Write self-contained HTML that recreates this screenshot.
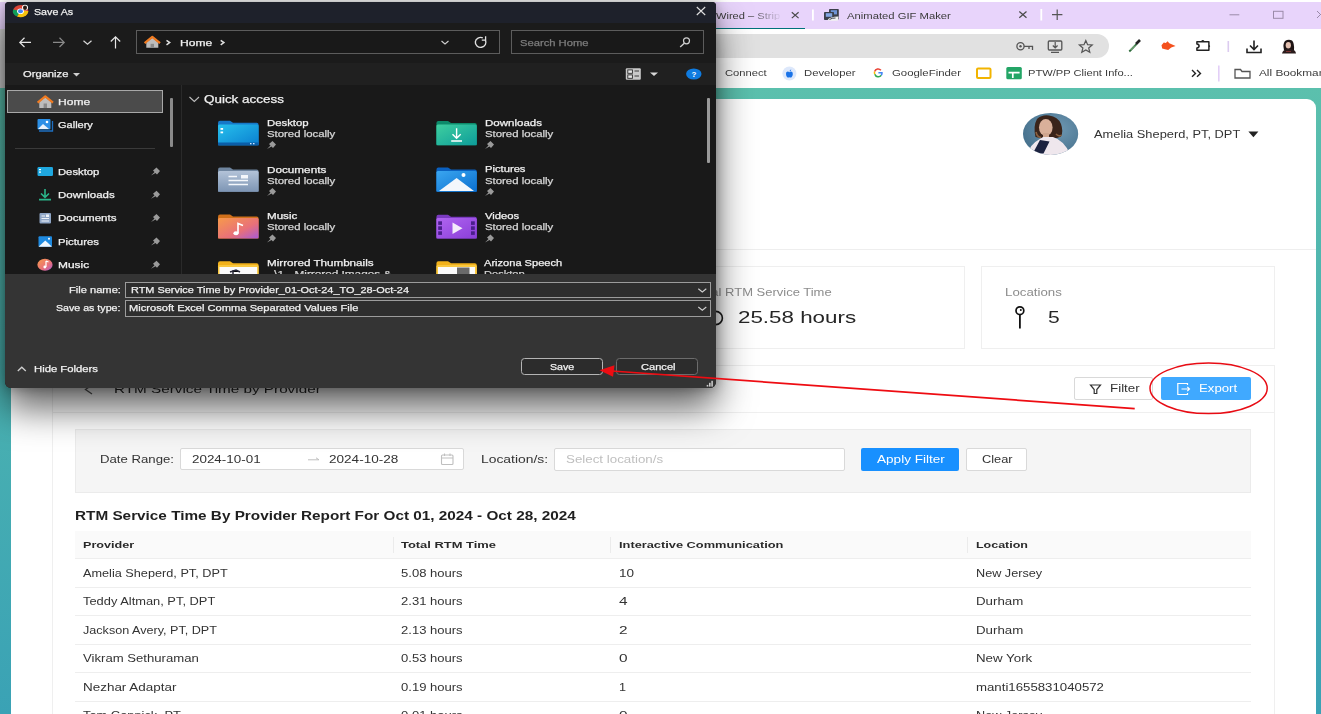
<!DOCTYPE html>
<html><head><meta charset="utf-8">
<style>
html,body{margin:0;padding:0;width:1321px;height:714px;overflow:hidden;background:#fff;font-family:"Liberation Sans",sans-serif;}
.a{position:absolute;}
.t{position:absolute;white-space:nowrap;transform-origin:0 0;font-family:"Liberation Sans",sans-serif;}
svg{position:absolute;overflow:visible;}
</style></head><body>
<!-- ============ BROWSER CHROME ============ -->
<div class="a" style="left:0;top:0;width:1321px;height:2px;background:#ffffff"></div>
<div class="a" style="left:0;top:2px;width:1321px;height:26.5px;background:#e8d4fb"></div>
<div class="a" style="left:600px;top:27.8px;width:204.6px;height:1.5px;background:#00737a"></div>
<div class="a" style="left:0;top:30px;width:1321px;height:58px;background:#ffffff"></div>
<div class="a" style="left:0;top:33.7px;width:1108.7px;height:24.7px;background:#e1e1e1;border-radius:0 12.5px 12.5px 0"></div>
<svg style="left:0;top:0" width="1321" height="90" viewBox="0 0 1321 90">
 <!-- tab close -->
 <path d="M791.8 12.3 L798.6 18.1 M798.6 12.3 L791.8 18.1" stroke="#4a4a4a" stroke-width="1.2"/>
 <rect x="812" y="9.5" width="1.8" height="11" fill="#ffffff"/>
 <!-- gif icon -->
 <rect x="829" y="9" width="9.8" height="10.5" fill="#3a3f4a" rx="0.8"/>
 <rect x="830.8" y="10.2" width="6.2" height="4.2" fill="#6f95d6"/>
 <rect x="824" y="12" width="10" height="8" fill="#3a3f4a" rx="0.8"/>
 <rect x="825.8" y="13.2" width="6.4" height="3.6" fill="#82a6e2"/>
 <path d="M827.5 20.2 Q829.5 16.8 838.5 16.6 L838 20.4 Q834 21.4 827.5 20.2 Z" fill="#f2f2f2"/>
 <path d="M829.5 19.5 Q832 17.8 835.5 18" fill="none" stroke="#2a3140" stroke-width="0.9"/>
 <path d="M1019.3 11.5 L1026.5 17.8 M1026.5 11.5 L1019.3 17.8" stroke="#4a4a4a" stroke-width="1.2"/>
 <rect x="1040.4" y="9" width="1.8" height="11.5" fill="#ffffff"/>
 <path d="M1052 14.7 H1062.4 M1057.2 9.5 V19.9" stroke="#555" stroke-width="1.2"/>
 <path d="M1229.5 14.8 H1239.3" stroke="#9a8aa8" stroke-width="1"/>
 <rect x="1273.5" y="11.3" width="9.5" height="7" fill="none" stroke="#9a8aa8" stroke-width="1"/>
 <path d="M1317 11 L1324 18 M1324 11 L1317 18" stroke="#9a8aa8" stroke-width="1"/>
 <!-- address bar icons -->
 <circle cx="1020.5" cy="46.3" r="3.6" fill="none" stroke="#555" stroke-width="1.3"/>
 <circle cx="1020.5" cy="46.3" r="1.2" fill="#555"/>
 <path d="M1024 46.3 H1032.5 V50 M1029 46.3 V49" fill="none" stroke="#555" stroke-width="1.3"/>
 <rect x="1048.3" y="41" width="13.5" height="9" fill="none" stroke="#555" stroke-width="1.3" rx="1"/>
 <path d="M1051 52.3 H1059 M1055.2 42 V47.5 M1052.8 45.5 L1055.2 47.8 L1057.6 45.5" fill="none" stroke="#555" stroke-width="1.2"/>
 <path d="M1085.8 40.5 L1087.6 44.7 L1092.2 45 L1088.7 48 L1089.8 52.3 L1085.8 49.9 L1081.8 52.3 L1082.9 48 L1079.4 45 L1084 44.7 Z" fill="none" stroke="#555" stroke-width="1.2"/>
 <!-- extensions -->
 <path d="M1129.3 51.5 L1136.5 44.2" stroke="#2d6b3a" stroke-width="1.9"/><path d="M1130.5 50 L1135 45.5" stroke="#b8e0b0" stroke-width="0.8"/>
 <path d="M1136 44 L1140 40" stroke="#222" stroke-width="2.6"/>
 <path d="M1161.5 45.2 L1163.8 42.6 L1165.8 43 L1167.6 41.3 L1169.3 43.2 L1175.6 46 L1171.2 47.4 L1168.2 50 L1165 49.2 L1162.2 48.6 Z" fill="#f4511e"/>
 <path d="M1196.9 41.7 H1208.9 V50.2 H1196.9 V47.9 Q1199.1 47.6 1199.1 45.95 Q1199.1 44.3 1196.9 44 Z" fill="none" stroke="#222" stroke-width="1.5" stroke-linejoin="round"/><path d="M1201 41.2 Q1202.8 38.9 1204.6 41.2 Z" fill="#222"/><path d="M1208.9 44.9 Q1211.4 46 1208.9 47.2 Z" fill="#222"/>
 <rect x="1227.5" y="41" width="1.6" height="11" fill="#dccbf0"/>
 <path d="M1254 40.5 V49 M1250 45.5 L1254 49.5 L1258 45.5 M1247 48.5 V52.5 H1261 V48.5" fill="none" stroke="#222" stroke-width="1.6"/>
 <path d="M1284 50 Q1282.5 44 1285 41 Q1288.5 38.6 1292 40.5 Q1294.5 43 1294 50 Z" fill="#1e1414"/>
 <ellipse cx="1288.3" cy="45.2" rx="2.6" ry="3.3" fill="#e4c0b0"/>
 <path d="M1282 53.6 Q1283 49.5 1287 49 L1291 49 Q1295.5 49.5 1296 53.6 Z" fill="#2a1c1c"/>
 <path d="M1286 51.5 L1291 51.5" stroke="#7a3030" stroke-width="1"/>
 <!-- bookmarks -->
 <circle cx="789.4" cy="73.5" r="7" fill="#dde8fb"/>
 <path d="M789.4 72.2 C788 71 786 71.5 786 73.9 C786 76 787.4 77.6 788.3 77.6 C788.9 77.6 789 77.3 789.4 77.3 C789.8 77.3 790 77.6 790.6 77.6 C791.5 77.6 792.8 75.9 792.8 73.9 C792.8 71.5 790.8 71 789.4 72.2 Z" fill="#1a73e8"/><path d="M789.5 71.5 Q789.7 69.7 791.3 69.5 Q791 71.2 789.5 71.5 Z" fill="#1a73e8"/>
 <path d="M880.9 70.3 A3.7 3.7 0 0 0 874.6 71.5" fill="none" stroke="#ea4335" stroke-width="1.5"/>
 <path d="M874.6 71.5 A3.7 3.7 0 0 0 874.8 74.2" fill="none" stroke="#fbbc05" stroke-width="1.5"/>
 <path d="M874.8 74.2 A3.7 3.7 0 0 0 881.3 75.3" fill="none" stroke="#34a853" stroke-width="1.5"/>
 <path d="M881.3 75.3 A3.7 3.7 0 0 0 882 72.8 H878.4" fill="none" stroke="#4285f4" stroke-width="1.5"/>
 <rect x="977" y="68.5" width="13.5" height="9.5" fill="none" stroke="#f2b400" stroke-width="2" rx="1"/>
 <rect x="1006.3" y="67" width="15.5" height="12.3" fill="#23a566" rx="1.5"/>
 <path d="M1008.5 72.6 H1019.6 M1012.8 72.6 V78" stroke="#fff" stroke-width="1.7"/>
 <path d="M1192 70 L1195.5 73.4 L1192 76.8 M1197 70 L1200.5 73.4 L1197 76.8" fill="none" stroke="#222" stroke-width="1.4"/>
 <rect x="1218" y="65.5" width="1.6" height="16" fill="#e3cff7"/>
 <path d="M1235 70 V78 H1250 V71.5 H1242 L1240.5 69.5 H1235 Z" fill="none" stroke="#555" stroke-width="1.3"/>
</svg>
<div class="a" style="left:0;top:29px;width:6px;height:59px;background:#d2d2d2"></div>
<div class="t" style="left:715.80px;top:11.62px;font-size:8.70px;line-height:8.70px;color:#3b3b3b;font-weight:400;transform:scaleX(1.2758);-webkit-mask-image:linear-gradient(to right,#000 55%,rgba(0,0,0,0.55) 75%,rgba(0,0,0,0.1) 100%);">Wired – Strip</div>
<div class="t" style="left:847.00px;top:11.62px;font-size:8.70px;line-height:8.70px;color:#3b3b3b;font-weight:400;transform:scaleX(1.2958);">Animated GIF Maker</div>
<div class="t" style="left:724.80px;top:68.92px;font-size:8.70px;line-height:8.70px;color:#3b3b3b;font-weight:400;transform:scaleX(1.2877);">Connect</div>
<div class="t" style="left:803.60px;top:68.92px;font-size:8.70px;line-height:8.70px;color:#3b3b3b;font-weight:400;transform:scaleX(1.2994);">Developer</div>
<div class="t" style="left:891.70px;top:68.92px;font-size:8.70px;line-height:8.70px;color:#3b3b3b;font-weight:400;transform:scaleX(1.3102);">GoogleFinder</div>
<div class="t" style="left:1027.60px;top:68.92px;font-size:8.70px;line-height:8.70px;color:#3b3b3b;font-weight:400;transform:scaleX(1.2801);">PTW/PP Client Info...</div>
<div class="t" style="left:1258.50px;top:68.92px;font-size:8.70px;line-height:8.70px;color:#3b3b3b;font-weight:400;transform:scaleX(1.3573);">All Bookmarks</div>
<!-- ============ PAGE ============ -->
<div class="a" style="left:0;top:88px;width:1321px;height:626px;background:linear-gradient(180deg,#5bc0ad 0%,#4cb3b0 40%,#3aa2b5 100%)"></div>
<div class="a" style="left:10.5px;top:99px;width:1305px;height:640px;background:#ffffff;border-radius:0 9px 0 0"></div>
<div class="a" style="left:11px;top:249px;width:1304.5px;height:1px;background:#eeeeee"></div>
<!-- stats cards -->
<div class="a" style="left:671px;top:266.3px;width:291.6px;height:81px;border:1px solid #efefef;box-sizing:content-box"></div>
<div class="a" style="left:981.2px;top:266.3px;width:291.5px;height:81px;border:1px solid #efefef"></div>
<!-- report card -->
<div class="a" style="left:51.5px;top:364.5px;width:1221.7px;height:400px;border:1px solid #efefef"></div>
<div class="a" style="left:51.5px;top:411.7px;width:1222.9px;height:1px;background:#efefef"></div>
<div class="a" style="left:1073.6px;top:377.2px;width:77.7px;height:20.7px;border:1px solid #d9d9d9;border-radius:2px;background:#fff"></div>
<div class="a" style="left:1161.3px;top:377.2px;width:89.7px;height:22.6px;border-radius:2px;background:#40a9ff"></div>
<!-- filter panel -->
<div class="a" style="left:75.2px;top:429px;width:1173.8px;height:61.5px;border:1px solid #ebebeb;background:#f5f5f5"></div>
<div class="a" style="left:180.4px;top:447.6px;width:282px;height:20.9px;border:1px solid #d9d9d9;border-radius:2px;background:#fff"></div>
<div class="a" style="left:554px;top:447.8px;width:289px;height:20.9px;border:1px solid #d9d9d9;border-radius:2px;background:#fff"></div>
<div class="a" style="left:861px;top:447.8px;width:97.6px;height:22.8px;border-radius:2px;background:#1890ff"></div>
<div class="a" style="left:966.2px;top:447.9px;width:59.3px;height:20.7px;border:1px solid #d9d9d9;border-radius:2px;background:#fff"></div>
<!-- table -->
<div class="a" style="left:75.4px;top:531px;width:1175.8px;height:26.8px;background:#fafafa;border-bottom:1px solid #eeeeee"></div>
<div class="a" style="left:392.8px;top:537px;width:1px;height:16px;background:#ebebeb"></div>
<div class="a" style="left:610px;top:537px;width:1px;height:16px;background:#ebebeb"></div>
<div class="a" style="left:967px;top:537px;width:1px;height:16px;background:#ebebeb"></div>
<div class="a" style="left:75.4px;top:586.6px;width:1175.8px;height:1px;background:#eeeeee"></div>
<div class="a" style="left:75.4px;top:615.1px;width:1175.8px;height:1px;background:#eeeeee"></div>
<div class="a" style="left:75.4px;top:643.6px;width:1175.8px;height:1px;background:#eeeeee"></div>
<div class="a" style="left:75.4px;top:672.1px;width:1175.8px;height:1px;background:#eeeeee"></div>
<div class="a" style="left:75.4px;top:700.6px;width:1175.8px;height:1px;background:#eeeeee"></div>
<svg style="left:0;top:0" width="1321" height="714" viewBox="0 0 1321 714">
 <!-- avatar -->
 <defs><clipPath id="av"><ellipse cx="1050.6" cy="133.9" rx="27.6" ry="21"/></clipPath>
 <radialGradient id="avbg" cx="0.6" cy="0.4" r="0.7"><stop offset="0" stop-color="#6f98b3"/><stop offset="1" stop-color="#3f6a86"/></radialGradient></defs>
 <g clip-path="url(#av)">
  <rect x="1020" y="110" width="62" height="48" fill="url(#avbg)"/>
  <path d="M1035.5 137 Q1033 126 1037 119 Q1042 114.5 1049 115.5 Q1058 116.5 1061 124 Q1063.5 131 1061 136.5 L1057 138 L1040 138 Z" fill="#3a241b"/>
  <path d="M1036 132 Q1037 137 1041 137.5 M1056 134 Q1059 137 1061.5 135" stroke="#8a6040" stroke-width="1.6" fill="none"/>
  <ellipse cx="1045.8" cy="127.5" rx="6.8" ry="8.4" fill="#d9b09a"/>
  <path d="M1039 121 Q1044 117 1052 120 L1052 118 Q1045 115 1039 119 Z" fill="#3a241b"/>
  <rect x="1043" y="133" width="6" height="6" fill="#cfa58e"/>
  <path d="M1027 158 Q1028.5 145 1039 139.5 L1043 137 L1053 137 Q1066 141 1071.5 158 Z" fill="#efe7ed"/>
  <path d="M1032.5 154 L1040 140 L1049.5 141.5 L1043.5 153.5 Z" fill="#1c2340"/>
 </g>
 <path d="M1248.4 131.5 H1258.4 L1253.4 137.3 Z" fill="#222"/>
 <!-- clock icon -->
 <circle cx="715.8" cy="318" r="6.6" fill="none" stroke="#1a1a1a" stroke-width="1.6"/>
 <!-- location pin -->
 <circle cx="1019.9" cy="310.7" r="3.9" fill="none" stroke="#111" stroke-width="1.7"/>
 <circle cx="1020.8" cy="309.9" r="1" fill="#111"/>
 <path d="M1019.9 314.6 V328.6" stroke="#111" stroke-width="1.8"/>
 <!-- back arrow -->
 <path d="M92 385 L85.5 389.5 L92 394" fill="none" stroke="#555" stroke-width="1.3"/>
 <!-- filter icon -->
 <path d="M1090.5 385 H1100.5 L1096.8 389.5 V393.5 H1094.2 V389.5 Z" fill="none" stroke="#333" stroke-width="1.2"/>
 <!-- export icon -->
 <path d="M1187.5 385 V383.5 H1177.8 V394.5 H1187.5 V393" fill="none" stroke="#fff" stroke-width="1.2"/>
 <path d="M1181.5 389 H1189.5 M1187.3 386.8 L1189.5 389 L1187.3 391.2" fill="none" stroke="#fff" stroke-width="1.2"/>
 <!-- date arrow -->
 <path d="M308 459.8 H319 L316 457.8" fill="none" stroke="#bfbfbf" stroke-width="1"/>
 <!-- calendar -->
 <rect x="441.5" y="455" width="11.5" height="9.5" fill="none" stroke="#bfbfbf" stroke-width="1.1" rx="1"/>
 <path d="M441.5 458 H453 M444.5 453.5 V456 M450 453.5 V456" stroke="#bfbfbf" stroke-width="1.1"/>
</svg>
<div class="t" style="left:1093.80px;top:128.63px;font-size:10.85px;line-height:10.85px;color:#333333;font-weight:400;transform:scaleX(1.1839);">Amelia Sheperd, PT, DPT</div>
<div class="t" style="left:694.00px;top:287.91px;font-size:10.32px;line-height:10.32px;color:#8c8c8c;font-weight:400;transform:scaleX(1.2596);">Total RTM Service Time</div>
<div class="t" style="left:737.50px;top:310.13px;font-size:15.87px;line-height:15.87px;color:#262626;font-weight:400;transform:scaleX(1.4097);">25.58 hours</div>
<div class="t" style="left:1004.50px;top:287.91px;font-size:10.32px;line-height:10.32px;color:#8c8c8c;font-weight:400;transform:scaleX(1.2871);">Locations</div>
<div class="t" style="left:1047.60px;top:310.33px;font-size:15.87px;line-height:15.87px;color:#262626;font-weight:400;transform:scaleX(1.3239);">5</div>
<div class="t" style="left:113.80px;top:383.57px;font-size:11.24px;line-height:11.24px;color:#262626;font-weight:400;transform:scaleX(1.3589);">RTM Service Time by Provider</div>
<div class="t" style="left:1110.00px;top:383.56px;font-size:10.05px;line-height:10.05px;color:#333333;font-weight:400;transform:scaleX(1.3304);">Filter</div>
<div class="t" style="left:1199.00px;top:383.56px;font-size:10.05px;line-height:10.05px;color:#ffffff;font-weight:400;transform:scaleX(1.3153);">Export</div>
<div class="t" style="left:99.50px;top:453.63px;font-size:10.85px;line-height:10.85px;color:#333333;font-weight:400;transform:scaleX(1.2150);">Date Range:</div>
<div class="t" style="left:191.70px;top:453.63px;font-size:10.85px;line-height:10.85px;color:#333333;font-weight:400;transform:scaleX(1.2365);">2024-10-01</div>
<div class="t" style="left:329.00px;top:453.63px;font-size:10.85px;line-height:10.85px;color:#333333;font-weight:400;transform:scaleX(1.2491);">2024-10-28</div>
<div class="t" style="left:480.50px;top:453.63px;font-size:10.85px;line-height:10.85px;color:#333333;font-weight:400;transform:scaleX(1.2789);">Location/s:</div>
<div class="t" style="left:566.00px;top:453.63px;font-size:10.85px;line-height:10.85px;color:#bfbfbf;font-weight:400;transform:scaleX(1.2294);">Select location/s</div>
<div class="t" style="left:876.80px;top:453.67px;font-size:10.58px;line-height:10.58px;color:#ffffff;font-weight:400;transform:scaleX(1.2826);">Apply Filter</div>
<div class="t" style="left:982.00px;top:453.67px;font-size:10.58px;line-height:10.58px;color:#333333;font-weight:400;transform:scaleX(1.2087);">Clear</div>
<div class="t" style="left:75.40px;top:511.36px;font-size:11.90px;line-height:11.90px;color:#1f1f1f;font-weight:700;transform:scaleX(1.2873);">RTM Service Time By Provider Report For Oct 01, 2024 - Oct 28, 2024</div>
<div class="t" style="left:83.20px;top:539.80px;font-size:9.79px;line-height:9.79px;color:#2a2a2a;font-weight:700;transform:scaleX(1.2895);">Provider</div>
<div class="t" style="left:401.00px;top:539.80px;font-size:9.79px;line-height:9.79px;color:#2a2a2a;font-weight:700;transform:scaleX(1.3206);">Total RTM Time</div>
<div class="t" style="left:619.00px;top:539.80px;font-size:9.79px;line-height:9.79px;color:#2a2a2a;font-weight:700;transform:scaleX(1.3091);">Interactive Communication</div>
<div class="t" style="left:975.80px;top:539.80px;font-size:9.79px;line-height:9.79px;color:#2a2a2a;font-weight:700;transform:scaleX(1.2751);">Location</div>
<div class="t" style="left:83.20px;top:567.87px;font-size:10.58px;line-height:10.58px;color:#333333;font-weight:400;transform:scaleX(1.2002);">Amelia Sheperd, PT, DPT</div>
<div class="t" style="left:401.00px;top:567.87px;font-size:10.58px;line-height:10.58px;color:#333333;font-weight:400;transform:scaleX(1.2332);">5.08 hours</div>
<div class="t" style="left:619.00px;top:567.87px;font-size:10.58px;line-height:10.58px;color:#333333;font-weight:400;transform:scaleX(1.2781);">10</div>
<div class="t" style="left:975.80px;top:567.87px;font-size:10.58px;line-height:10.58px;color:#333333;font-weight:400;transform:scaleX(1.1971);">New Jersey</div>
<div class="t" style="left:83.20px;top:596.37px;font-size:10.58px;line-height:10.58px;color:#333333;font-weight:400;transform:scaleX(1.2160);">Teddy Altman, PT, DPT</div>
<div class="t" style="left:401.00px;top:596.37px;font-size:10.58px;line-height:10.58px;color:#333333;font-weight:400;transform:scaleX(1.2332);">2.31 hours</div>
<div class="t" style="left:619.00px;top:596.37px;font-size:10.58px;line-height:10.58px;color:#333333;font-weight:400;transform:scaleX(1.4528);">4</div>
<div class="t" style="left:975.80px;top:596.37px;font-size:10.58px;line-height:10.58px;color:#333333;font-weight:400;transform:scaleX(1.2560);">Durham</div>
<div class="t" style="left:83.20px;top:624.87px;font-size:10.58px;line-height:10.58px;color:#333333;font-weight:400;transform:scaleX(1.1900);">Jackson Avery, PT, DPT</div>
<div class="t" style="left:401.00px;top:624.87px;font-size:10.58px;line-height:10.58px;color:#333333;font-weight:400;transform:scaleX(1.2332);">2.13 hours</div>
<div class="t" style="left:619.00px;top:624.87px;font-size:10.58px;line-height:10.58px;color:#333333;font-weight:400;transform:scaleX(1.4528);">2</div>
<div class="t" style="left:975.80px;top:624.87px;font-size:10.58px;line-height:10.58px;color:#333333;font-weight:400;transform:scaleX(1.2560);">Durham</div>
<div class="t" style="left:83.20px;top:653.37px;font-size:10.58px;line-height:10.58px;color:#333333;font-weight:400;transform:scaleX(1.2418);">Vikram Sethuraman</div>
<div class="t" style="left:401.00px;top:653.37px;font-size:10.58px;line-height:10.58px;color:#333333;font-weight:400;transform:scaleX(1.2332);">0.53 hours</div>
<div class="t" style="left:619.00px;top:653.37px;font-size:10.58px;line-height:10.58px;color:#333333;font-weight:400;transform:scaleX(1.4528);">0</div>
<div class="t" style="left:975.80px;top:653.37px;font-size:10.58px;line-height:10.58px;color:#333333;font-weight:400;transform:scaleX(1.2585);">New York</div>
<div class="t" style="left:83.20px;top:681.87px;font-size:10.58px;line-height:10.58px;color:#333333;font-weight:400;transform:scaleX(1.2713);">Nezhar Adaptar</div>
<div class="t" style="left:401.00px;top:681.87px;font-size:10.58px;line-height:10.58px;color:#333333;font-weight:400;transform:scaleX(1.2332);">0.19 hours</div>
<div class="t" style="left:619.00px;top:681.87px;font-size:10.58px;line-height:10.58px;color:#333333;font-weight:400;transform:scaleX(1.1982);">1</div>
<div class="t" style="left:975.80px;top:681.87px;font-size:10.58px;line-height:10.58px;color:#333333;font-weight:400;transform:scaleX(1.2501);">manti1655831040572</div>
<div class="t" style="left:83.20px;top:710.37px;font-size:10.58px;line-height:10.58px;color:#333333;font-weight:400;transform:scaleX(1.2149);">Tom Connick, PT</div>
<div class="t" style="left:401.00px;top:710.37px;font-size:10.58px;line-height:10.58px;color:#333333;font-weight:400;transform:scaleX(1.2332);">0.01 hours</div>
<div class="t" style="left:619.00px;top:710.37px;font-size:10.58px;line-height:10.58px;color:#333333;font-weight:400;transform:scaleX(1.4528);">0</div>
<div class="t" style="left:975.80px;top:710.37px;font-size:10.58px;line-height:10.58px;color:#333333;font-weight:400;transform:scaleX(1.1971);">New Jersey</div>
<!-- ============ DIALOG ============ -->
<div class="a" style="left:5px;top:2px;width:711px;height:386px;border-radius:4px 4px 6px 6px;background:#191919;box-shadow:0 20px 37px rgba(0,0,0,0.62), 0 0 12px rgba(0,0,0,0.3)"></div>
<div class="a" style="left:5px;top:2px;width:711px;height:21px;border-radius:4px 4px 0 0;background:#1e212b"></div>
<div class="a" style="left:5px;top:23px;width:711px;height:40.2px;background:#1b1b1b"></div>
<div class="a" style="left:136px;top:30.3px;width:361.5px;height:22.2px;border:1px solid #5c5c5c;background:#191919"></div>
<div class="a" style="left:511px;top:30.3px;width:191px;height:22.2px;border:1px solid #5c5c5c;background:#191919"></div>
<div class="a" style="left:5px;top:63.2px;width:711px;height:21.6px;background:#202020"></div>
<div class="a" style="left:181px;top:85px;width:1px;height:189px;background:#2a2a2a"></div>
<div class="a" style="left:7.2px;top:90.2px;width:153.8px;height:20.6px;border:1px solid #a8a8a8;background:#4b4b4b"></div>
<div class="a" style="left:170.2px;top:98px;width:2.4px;height:49.4px;background:#8a8a8a;border-radius:1px"></div>
<div class="a" style="left:14.7px;top:148px;width:140.3px;height:1px;background:#3a3a3a"></div>
<div class="a" style="left:707.3px;top:98px;width:2.3px;height:64.7px;background:#9a9a9a;border-radius:1px"></div>
<svg style="left:0;top:0" width="720" height="390" viewBox="0 0 720 390">
 <!-- chrome icon -->
 <ellipse cx="20.7" cy="11" rx="7.6" ry="6.1" fill="#db4437"/>
 <path d="M20.7 11 L28.3 11 A7.6 6.1 0 0 1 17 16.4 Z" fill="#f4c20d"/>
 <path d="M20.7 11 L17 16.4 A7.6 6.1 0 0 1 13.1 9.5 Z" fill="#0f9d58"/>
 <ellipse cx="20.5" cy="11.3" rx="3.4" ry="2.8" fill="#fff"/>
 <ellipse cx="20.5" cy="11.3" rx="2.5" ry="2" fill="#4285f4"/>
 <ellipse cx="25" cy="7.5" rx="3" ry="2.8" fill="#fff"/>
 <ellipse cx="25" cy="7.8" rx="2" ry="2.2" fill="#2a1a14"/>
 <!-- close -->
 <path d="M696.8 7 L705.2 15 M705.2 7 L696.8 15" stroke="#e0e0e0" stroke-width="1.1"/>
 <!-- nav arrows -->
 <path d="M31 42.4 H19.8 M24.5 37.8 L19.8 42.4 L24.5 47" fill="none" stroke="#e6e6e6" stroke-width="1.2"/>
 <path d="M53 42.4 H64.2 M59.5 37.8 L64.2 42.4 L59.5 47" fill="none" stroke="#8a8a8a" stroke-width="1.2"/>
 <path d="M83.5 40.8 L87.5 44.3 L91.5 40.8" fill="none" stroke="#d8d8d8" stroke-width="1.2"/>
 <path d="M115.5 48.5 V36.8 M110.8 41.5 L115.5 36.8 L120.2 41.5" fill="none" stroke="#e6e6e6" stroke-width="1.2"/>
 <!-- home icon address -->
 <path d="M146.3 42.5 L152.3 37.8 L158.3 42.5 V47.8 H146.3 Z" fill="#bdbdbd"/>
 <path d="M144.6 43.2 L152.3 36.8 L160 43.2" fill="none" stroke="#f07b22" stroke-width="2.2" stroke-linejoin="round"/>
 <rect x="150.6" y="43.8" width="3.4" height="4" fill="#8a8a8a"/>
 <path d="M166.5 40.3 L169.7 42.6 L166.5 44.9 M220.7 40.3 L223.9 42.6 L220.7 44.9" fill="none" stroke="#e0e0e0" stroke-width="1.5"/>
 <path d="M441.5 41 L445 44 L448.5 41" fill="none" stroke="#d0d0d0" stroke-width="1.1"/>
 <path d="M485.3 40 A5.3 5 0 1 1 482.8 37.8" fill="none" stroke="#e0e0e0" stroke-width="1.4"/>
 <path d="M485.6 36.2 L485.6 40.2 L481.8 40.2" fill="none" stroke="#e0e0e0" stroke-width="1.3"/>
 <circle cx="686.5" cy="40.8" r="3" fill="none" stroke="#d0d0d0" stroke-width="1.2"/>
 <path d="M684.3 43.2 L680.2 47" stroke="#d0d0d0" stroke-width="1.4"/>
 <!-- organize caret -->
 <path d="M73 73 H80 L76.5 76.5 Z" fill="#d0d0d0"/>
 <!-- view icon -->
 <rect x="625.8" y="68.3" width="15" height="11.5" fill="#c9c9c9" rx="1"/>
 <rect x="627.8" y="69.9" width="4.6" height="3.4" fill="#e8e8e8" stroke="#2a2a2a" stroke-width="0.9"/>
 <rect x="627.8" y="74.9" width="4.6" height="3.4" fill="#e8e8e8" stroke="#2a2a2a" stroke-width="0.9"/>
 <path d="M634.5 71 H639 M634.5 76 H639" stroke="#2a2a2a" stroke-width="0.9"/>
 <path d="M650 72.5 H658 L654 76 Z" fill="#d8d8d8"/>
 <ellipse cx="693.8" cy="74" rx="7.7" ry="5.6" fill="#0f7be0"/>
 <text x="691.6" y="77.3" font-family="Liberation Sans" font-weight="700" font-size="8" fill="#fff">?</text>
 <!-- nav pane icons -->
 <path d="M39.3 102 L45.3 97.3 L51.3 102 V108 H39.3 Z" fill="#bdbdbd"/>
 <path d="M37.6 102.7 L45.3 96.3 L53 102.7" fill="none" stroke="#f07b22" stroke-width="2.2" stroke-linejoin="round"/>
 <rect x="43.6" y="103.5" width="3.4" height="4.5" fill="#8a8a8a"/>
 <rect x="37.5" y="119" width="13" height="10.5" fill="#2b8fe6" rx="1"/>
 <path d="M39 131 H52.5 V121" fill="none" stroke="#1e6fc0" stroke-width="1.3"/>
 <path d="M38 129 L43 124 L49 129 Z" fill="#e8f2fb"/>
 <circle cx="47" cy="122" r="1.3" fill="#fff"/>
 <rect x="37.5" y="167" width="15.5" height="9" fill="#1fa8e0" rx="1.2"/>
 <rect x="39" y="169" width="2" height="1.2" fill="#fff"/><rect x="39" y="171.5" width="2" height="1.2" fill="#fff"/>
 <path d="M45 189 V197 M41 193.5 L45 197.3 L49 193.5 M39 199.6 H51" fill="none" stroke="#2bb58a" stroke-width="1.6"/>
 <rect x="39.5" y="213" width="11.5" height="10.5" fill="#8fa6c6" rx="1"/>
 <path d="M41.5 216 H45 M41.5 218.5 H49 M41.5 221 H49" stroke="#eef2f8" stroke-width="1"/>
 <rect x="46" y="214.5" width="3" height="2.5" fill="#eef2f8"/>
 <rect x="38.5" y="236.3" width="13.5" height="10.5" fill="#1f8ae0" rx="1"/>
 <path d="M38.5 246.8 L45.3 240.5 L52 246.8 Z" fill="#f0f6fc"/>
 <circle cx="49" cy="238.8" r="1" fill="#fff"/>
 <ellipse cx="45" cy="264.8" rx="7.6" ry="6" fill="url(#gmus)"/>
 <path d="M46 261 V267 M46 261 L48.5 262" stroke="#fff" stroke-width="1.2" fill="none"/>
 <circle cx="44.8" cy="267" r="1.4" fill="#fff"/>
 <!-- chevron quick access -->
 <path d="M189.5 97 L194.3 101.5 L199 97" fill="none" stroke="#bdbdbd" stroke-width="1.1"/>
 <!-- pins nav -->
 <g fill="#9a9a9a">
  <path d="M151 175.5 L154.5 172 L153 170.5 L156.5 167.5 L160 171 L157 174.5 L155.5 173 Z"/>
  <path d="M151 198.8 L154.5 195.3 L153 193.8 L156.5 190.8 L160 194.3 L157 197.8 L155.5 196.3 Z"/>
  <path d="M151 222.1 L154.5 218.6 L153 217.1 L156.5 214.1 L160 217.6 L157 221.1 L155.5 219.6 Z"/>
  <path d="M151 245.4 L154.5 241.9 L153 240.4 L156.5 237.4 L160 240.9 L157 244.4 L155.5 242.9 Z"/>
  <path d="M151 268.7 L154.5 265.2 L153 263.7 L156.5 260.7 L160 264.2 L157 267.7 L155.5 266.2 Z"/>
 </g>
 <!-- tiles pins -->
 <g fill="#9a9a9a">
  <path d="M267 149 L270.5 145.5 L269 144 L272.5 141 L276 144.5 L273 148 L271.5 146.5 Z"/>
  <path d="M267 196 L270.5 192.5 L269 191 L272.5 188 L276 191.5 L273 195 L271.5 193.5 Z"/>
  <path d="M267 242.5 L270.5 239 L269 237.5 L272.5 234.5 L276 238 L273 241.5 L271.5 240 Z"/>
  <path d="M485 149 L488.5 145.5 L487 144 L490.5 141 L494 144.5 L491 148 L489.5 146.5 Z"/>
  <path d="M485 196 L488.5 192.5 L487 191 L490.5 188 L494 191.5 L491 195 L489.5 193.5 Z"/>
  <path d="M485 242.5 L488.5 239 L487 237.5 L490.5 234.5 L494 238 L491 241.5 L489.5 240 Z"/>
 </g>
 <!-- folders col1 -->
 <defs>
  <linearGradient id="gdesk" x1="0" y1="0" x2="1" y2="1"><stop offset="0" stop-color="#27c0ec"/><stop offset="1" stop-color="#0a7fd0"/></linearGradient>
  <linearGradient id="gdl" x1="0" y1="0" x2="1" y2="1"><stop offset="0" stop-color="#3fcf9f"/><stop offset="1" stop-color="#0d9c9a"/></linearGradient>
  <linearGradient id="gdoc" x1="0" y1="0" x2="0" y2="1"><stop offset="0" stop-color="#b3c3d8"/><stop offset="1" stop-color="#7d95b4"/></linearGradient>
  <linearGradient id="gpic" x1="0" y1="0" x2="1" y2="1"><stop offset="0" stop-color="#3aa6f0"/><stop offset="1" stop-color="#0a6fd0"/></linearGradient>
  <linearGradient id="gmus" x1="0" y1="0" x2="1" y2="1"><stop offset="0" stop-color="#f79a4a"/><stop offset="0.6" stop-color="#e8707a"/><stop offset="1" stop-color="#a85ad8"/></linearGradient>
  <linearGradient id="gvid" x1="0" y1="0" x2="1" y2="1"><stop offset="0" stop-color="#b065f0"/><stop offset="1" stop-color="#8a3ed8"/></linearGradient>
 </defs>
 <!-- desktop folder -->
 <path d="M218 123 Q218 120.8 220 120.8 H230 L233 122.8 H256.6 Q258.6 122.8 258.6 124.8 V145.3 H218 Z" fill="#1678c8"/>
 <rect x="218" y="124.5" width="40.6" height="20.8" rx="1.5" fill="url(#gdesk)"/>
 <rect x="218" y="142.5" width="40.6" height="2.8" fill="#0b5ea8"/>
 <rect x="220.5" y="128" width="2.6" height="1.8" fill="#fff"/><rect x="220.5" y="131.5" width="2.6" height="1.8" fill="#fff"/>
 <rect x="250" y="143" width="1.5" height="1.3" fill="#cfe8ff"/><rect x="253" y="143" width="1.5" height="1.3" fill="#cfe8ff"/>
 <!-- documents folder -->
 <path d="M218 170 Q218 167.6 220 167.6 H230 L233 169.6 H256.6 Q258.6 169.6 258.6 171.6 V191.7 H218 Z" fill="#6f859f"/>
 <rect x="218" y="171" width="40.6" height="20.7" rx="1.5" fill="url(#gdoc)"/>
 <path d="M228.5 176.5 H237 M228.5 180.5 H248 M228.5 184.5 H248" stroke="#f4f7fb" stroke-width="1.6"/>
 <rect x="241" y="175" width="7" height="3.5" fill="#f4f7fb"/>
 <!-- music folder -->
 <path d="M218 217 Q218 214.6 220 214.6 H230 L233 216.6 H256.6 Q258.6 216.6 258.6 218.6 V238.6 H218 Z" fill="#d0701a"/>
 <rect x="218" y="218" width="40.6" height="20.6" rx="1.5" fill="url(#gmus)"/>
 <path d="M238 233 V223.5 L243 225.5" fill="none" stroke="#fff" stroke-width="1.6"/>
 <ellipse cx="236" cy="233.3" rx="2.6" ry="2" fill="#fff"/>
 <!-- mirrored thumbnails folder -->
 <path d="M218 263.5 Q218 261.3 220 261.3 H230 L233 263.3 H256.6 Q258.6 263.3 258.6 265.3 V280 H218 Z" fill="#f2b21c"/>
 <rect x="218" y="265" width="40.6" height="15" rx="1.5" fill="#f9c840"/>
 <rect x="219.5" y="267" width="37.6" height="10" fill="#fbfbfb"/>
 <path d="M230 272 L236 270 L240 272 M233 270 V275" stroke="#2a2a3a" stroke-width="1.5"/>
 <!-- downloads folder -->
 <path d="M436.4 123 Q436.4 120.9 438.4 120.9 H448 L451 122.9 H474.8 Q476.8 122.9 476.8 124.9 V145.2 H436.4 Z" fill="#0d8a6a"/>
 <rect x="436.4" y="124.5" width="40.4" height="20.7" rx="1.5" fill="url(#gdl)"/>
 <path d="M456.6 128.3 V138 M452.5 134.2 L456.6 138.3 L460.7 134.2 M451.2 141 H462" fill="none" stroke="#fff" stroke-width="1.4"/>
 <!-- pictures folder -->
 <path d="M436.4 170 Q436.4 167.6 438.4 167.6 H448 L451 169.6 H474.8 Q476.8 169.6 476.8 171.6 V191.7 H436.4 Z" fill="#0a60c0"/>
 <rect x="436.4" y="171" width="40.4" height="20.7" rx="1.5" fill="url(#gpic)"/>
 <path d="M439 191 L456.6 178 L474 191 Z" fill="#f2f7fc"/>
 <circle cx="463.5" cy="175" r="2" fill="#fff"/>
 <!-- videos folder -->
 <path d="M436.4 217 Q436.4 214.7 438.4 214.7 H448 L451 216.7 H474.8 Q476.8 216.7 476.8 218.7 V238.6 H436.4 Z" fill="#7a3ac0"/>
 <rect x="436.4" y="218" width="40.4" height="20.6" rx="1.5" fill="url(#gvid)"/>
 <g fill="#4a1f8a"><rect x="438.2" y="221.3" width="3.8" height="3.6"/><rect x="438.2" y="226.3" width="3.8" height="3.6"/><rect x="438.2" y="231.3" width="3.8" height="3.6"/><rect x="471" y="221.3" width="3.8" height="3.6"/><rect x="471" y="226.3" width="3.8" height="3.6"/><rect x="471" y="231.3" width="3.8" height="3.6"/></g>
 <path d="M452.5 222.5 L462.5 228.3 L452.5 234 Z" fill="#f4ecfb"/>
 <!-- arizona folder -->
 <path d="M436.4 263.5 Q436.4 261.3 438.4 261.3 H448 L451 263.3 H474.8 Q476.8 263.3 476.8 265.3 V280 H436.4 Z" fill="#f2b21c"/>
 <rect x="436.4" y="265" width="40.4" height="15" rx="1.5" fill="#f9c840"/>
 <rect x="438" y="267" width="37" height="10" fill="#fbfbfb"/>
 <rect x="457" y="267.5" width="12.5" height="8" fill="#6a6a6a"/>
</svg>
<div class="t" style="left:34.00px;top:7.61px;font-size:9.38px;line-height:9.38px;color:#f0f0f0;font-weight:400;transform:scaleX(1.1375);-webkit-text-stroke:0.25px currentColor;">Save As</div>
<div class="t" style="left:180.40px;top:38.81px;font-size:8.75px;line-height:8.75px;color:#f0f0f0;font-weight:400;transform:scaleX(1.3783);-webkit-text-stroke:0.25px currentColor;">Home</div>
<div class="t" style="left:520.00px;top:38.81px;font-size:8.75px;line-height:8.75px;color:#7c7c7c;font-weight:400;transform:scaleX(1.2799);-webkit-text-stroke:0.25px currentColor;">Search Home</div>
<div class="t" style="left:22.70px;top:69.79px;font-size:8.88px;line-height:8.88px;color:#f0f0f0;font-weight:400;transform:scaleX(1.2602);-webkit-text-stroke:0.25px currentColor;">Organize</div>
<div class="t" style="left:58.00px;top:97.81px;font-size:8.75px;line-height:8.75px;color:#f0f0f0;font-weight:400;transform:scaleX(1.3783);-webkit-text-stroke:0.25px currentColor;">Home</div>
<div class="t" style="left:58.00px;top:120.61px;font-size:8.75px;line-height:8.75px;color:#f0f0f0;font-weight:400;transform:scaleX(1.2582);-webkit-text-stroke:0.25px currentColor;">Gallery</div>
<div class="t" style="left:58.00px;top:167.81px;font-size:8.75px;line-height:8.75px;color:#f0f0f0;font-weight:400;transform:scaleX(1.2855);-webkit-text-stroke:0.25px currentColor;">Desktop</div>
<div class="t" style="left:58.00px;top:191.11px;font-size:8.75px;line-height:8.75px;color:#f0f0f0;font-weight:400;transform:scaleX(1.3090);-webkit-text-stroke:0.25px currentColor;">Downloads</div>
<div class="t" style="left:58.00px;top:214.41px;font-size:8.75px;line-height:8.75px;color:#f0f0f0;font-weight:400;transform:scaleX(1.3233);-webkit-text-stroke:0.25px currentColor;">Documents</div>
<div class="t" style="left:58.00px;top:237.81px;font-size:8.75px;line-height:8.75px;color:#f0f0f0;font-weight:400;transform:scaleX(1.2931);-webkit-text-stroke:0.25px currentColor;">Pictures</div>
<div class="t" style="left:58.00px;top:261.01px;font-size:8.75px;line-height:8.75px;color:#f0f0f0;font-weight:400;transform:scaleX(1.3638);-webkit-text-stroke:0.25px currentColor;">Music</div>
<div class="t" style="left:203.60px;top:94.00px;font-size:10.75px;line-height:10.75px;color:#f0f0f0;font-weight:400;transform:scaleX(1.2493);-webkit-text-stroke:0.25px currentColor;">Quick access</div>
<div class="t" style="left:266.60px;top:118.81px;font-size:8.75px;line-height:8.75px;color:#f0f0f0;font-weight:400;transform:scaleX(1.2979);-webkit-text-stroke:0.25px currentColor;">Desktop</div>
<div class="t" style="left:266.60px;top:129.91px;font-size:8.75px;line-height:8.75px;color:#d4d4d4;font-weight:400;transform:scaleX(1.2997);-webkit-text-stroke:0.25px currentColor;">Stored locally</div>
<div class="t" style="left:266.60px;top:166.11px;font-size:8.75px;line-height:8.75px;color:#f0f0f0;font-weight:400;transform:scaleX(1.3391);-webkit-text-stroke:0.25px currentColor;">Documents</div>
<div class="t" style="left:266.60px;top:177.21px;font-size:8.75px;line-height:8.75px;color:#d4d4d4;font-weight:400;transform:scaleX(1.2997);-webkit-text-stroke:0.25px currentColor;">Stored locally</div>
<div class="t" style="left:266.60px;top:212.31px;font-size:8.75px;line-height:8.75px;color:#f0f0f0;font-weight:400;transform:scaleX(1.3244);-webkit-text-stroke:0.25px currentColor;">Music</div>
<div class="t" style="left:266.60px;top:223.41px;font-size:8.75px;line-height:8.75px;color:#d4d4d4;font-weight:400;transform:scaleX(1.2997);-webkit-text-stroke:0.25px currentColor;">Stored locally</div>
<div class="t" style="left:484.70px;top:118.81px;font-size:8.75px;line-height:8.75px;color:#f0f0f0;font-weight:400;transform:scaleX(1.3159);-webkit-text-stroke:0.25px currentColor;">Downloads</div>
<div class="t" style="left:484.70px;top:129.91px;font-size:8.75px;line-height:8.75px;color:#d4d4d4;font-weight:400;transform:scaleX(1.2997);-webkit-text-stroke:0.25px currentColor;">Stored locally</div>
<div class="t" style="left:484.70px;top:165.41px;font-size:8.75px;line-height:8.75px;color:#f0f0f0;font-weight:400;transform:scaleX(1.2805);-webkit-text-stroke:0.25px currentColor;">Pictures</div>
<div class="t" style="left:484.70px;top:176.51px;font-size:8.75px;line-height:8.75px;color:#d4d4d4;font-weight:400;transform:scaleX(1.2997);-webkit-text-stroke:0.25px currentColor;">Stored locally</div>
<div class="t" style="left:484.70px;top:212.31px;font-size:8.75px;line-height:8.75px;color:#f0f0f0;font-weight:400;transform:scaleX(1.2843);-webkit-text-stroke:0.25px currentColor;">Videos</div>
<div class="t" style="left:484.70px;top:223.41px;font-size:8.75px;line-height:8.75px;color:#d4d4d4;font-weight:400;transform:scaleX(1.2997);-webkit-text-stroke:0.25px currentColor;">Stored locally</div>
<div class="t" style="left:266.60px;top:258.81px;font-size:8.75px;line-height:8.75px;color:#f0f0f0;font-weight:400;transform:scaleX(1.3309);-webkit-text-stroke:0.25px currentColor;">Mirrored Thumbnails</div>
<div class="t" style="left:266.60px;top:270.31px;font-size:8.75px;line-height:8.75px;color:#d4d4d4;font-weight:400;transform:scaleX(1.3451);-webkit-text-stroke:0.25px currentColor;">- \1 - Mirrored Images &amp;</div>
<div class="t" style="left:484.30px;top:258.81px;font-size:8.75px;line-height:8.75px;color:#f0f0f0;font-weight:400;transform:scaleX(1.2654);-webkit-text-stroke:0.25px currentColor;">Arizona Speech</div>
<div class="t" style="left:484.30px;top:270.31px;font-size:8.75px;line-height:8.75px;color:#cfcfcf;font-weight:400;transform:scaleX(1.2636);-webkit-text-stroke:0.25px currentColor;">Desktop</div>
<!-- bottom panel -->
<div class="a" style="left:5px;top:274px;width:711px;height:114px;background:#343434;border-radius:0 0 6px 6px"></div>
<div class="a" style="left:124.6px;top:282.2px;width:584.4px;height:14.2px;border:1px solid #9c9c9c;background:#2e2e2e"></div>
<div class="a" style="left:124.6px;top:300.4px;width:584.4px;height:14.4px;border:1px solid #9c9c9c;background:#2e2e2e"></div>
<div class="a" style="left:521px;top:358.3px;width:79.6px;height:14.3px;border:1.2px solid #b4b4b4;border-radius:3.5px;background:#2c2c2c"></div>
<div class="a" style="left:616px;top:358.3px;width:80.1px;height:14.3px;border:1.2px solid #6c6c6c;border-radius:3.5px;background:#2c2c2c"></div>
<svg style="left:0;top:0" width="720" height="390" viewBox="0 0 720 390">
 <path d="M698.3 288.8 L702.3 292 L706.3 288.8 M698.3 307 L702.3 310.2 L706.3 307" fill="none" stroke="#d0d0d0" stroke-width="1.1"/>
 <path d="M17.8 371 L21.8 367.2 L25.8 371" fill="none" stroke="#d0d0d0" stroke-width="1.3"/>
 <g fill="#c8c8c8"><rect x="711.3" y="380.8" width="1.6" height="5.8"/><rect x="709" y="382.8" width="1.6" height="3.8"/><rect x="706.7" y="384.9" width="1.6" height="1.7"/></g>
</svg>
<div class="t" style="left:68.50px;top:286.05px;font-size:9.12px;line-height:9.12px;color:#f0f0f0;font-weight:400;transform:scaleX(1.2206);-webkit-text-stroke:0.25px currentColor;">File name:</div>
<div class="t" style="left:130.50px;top:286.05px;font-size:9.12px;line-height:9.12px;color:#f0f0f0;font-weight:400;transform:scaleX(1.1981);-webkit-text-stroke:0.25px currentColor;">RTM Service Time by Provider_01-Oct-24_TO_28-Oct-24</div>
<div class="t" style="left:56.00px;top:304.35px;font-size:9.12px;line-height:9.12px;color:#f0f0f0;font-weight:400;transform:scaleX(1.1668);-webkit-text-stroke:0.25px currentColor;">Save as type:</div>
<div class="t" style="left:128.50px;top:304.35px;font-size:9.12px;line-height:9.12px;color:#f0f0f0;font-weight:400;transform:scaleX(1.2224);-webkit-text-stroke:0.25px currentColor;">Microsoft Excel Comma Separated Values File</div>
<div class="t" style="left:33.90px;top:364.81px;font-size:8.75px;line-height:8.75px;color:#f0f0f0;font-weight:400;transform:scaleX(1.2896);-webkit-text-stroke:0.25px currentColor;">Hide Folders</div>
<div class="t" style="left:550.00px;top:362.81px;font-size:8.75px;line-height:8.75px;color:#f0f0f0;font-weight:400;transform:scaleX(1.2166);-webkit-text-stroke:0.25px currentColor;">Save</div>
<div class="t" style="left:640.80px;top:362.81px;font-size:8.75px;line-height:8.75px;color:#f0f0f0;font-weight:400;transform:scaleX(1.2688);-webkit-text-stroke:0.25px currentColor;">Cancel</div>
<!-- ============ ANNOTATION ============ -->
<svg style="left:0;top:0" width="1321" height="714" viewBox="0 0 1321 714">
 <path d="M612 371 L1134.7 408.6" stroke="#ee0c12" stroke-width="1.7" fill="none"/>
 <path d="M599.5 370.2 L614.5 365.3 L613 376.8 Z" fill="#ee0c12"/>
 <ellipse cx="1208.6" cy="388.3" rx="58.6" ry="25.3" fill="none" stroke="#e80c14" stroke-width="1.5"/>
</svg>

</body></html>
